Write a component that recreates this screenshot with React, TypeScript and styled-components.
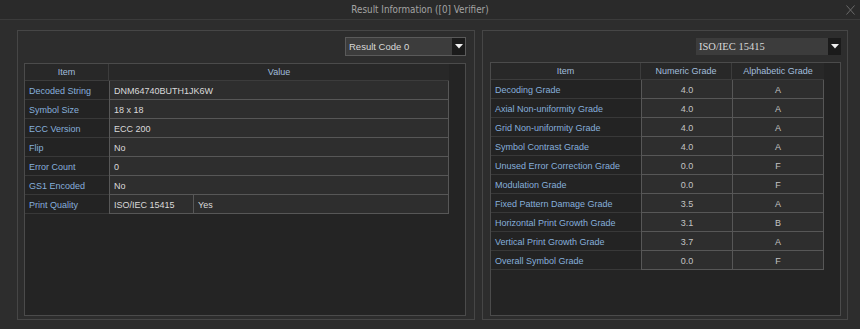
import React from 'react'
import styled, { createGlobalStyle } from 'styled-components'

const GlobalStyle = createGlobalStyle`
  html, body {
    margin: 0;
    padding: 0;
    background: #2d2d2d;
  }
  body {
    font-family: 'Liberation Sans', Arial, sans-serif;
    font-size: 9px;
  }
`

const Window = styled.div`
  width: 860px;
  height: 329px;
  background: #2d2d2d;
  display: flex;
  flex-direction: column;
  overflow: hidden;
`

const TitleBar = styled.div`
  height: 19px;
  background: #2a2a2a;
  border-bottom: 1px solid #3b3b3b;
  display: flex;
  align-items: center;
  justify-content: center;
  padding-right: 20px;
  position: relative;
`

const Title = styled.span`
  font-family: 'DejaVu Sans Condensed', 'Liberation Sans', sans-serif;
  font-stretch: condensed;
  font-size: 9.8px;
  line-height: 1;
  color: #a4a4a4;
`

const CloseButton = styled.button`
  position: absolute;
  right: 5px;
  top: 5px;
  width: 10px;
  height: 10px;
  padding: 0;
  border: none;
  background: transparent;
  display: flex;
  align-items: center;
  justify-content: center;
`

const Body = styled.div`
  display: flex;
  gap: 7px;
  padding: 10px 0 0 17px;
`

const GroupBox = styled.div<{ $width: number; $padLeft: number; $padRight: number }>`
  box-sizing: border-box;
  width: ${(p) => p.$width}px;
  height: 290px;
  border: 1px solid #464646;
  padding: 6px ${(p) => p.$padRight}px 3px ${(p) => p.$padLeft}px;
  display: flex;
  flex-direction: column;
`

const Toolbar = styled.div<{ $gap: number }>`
  display: flex;
  justify-content: flex-end;
  margin-bottom: ${(p) => p.$gap}px;
`

const Select = styled.div<{ $width: number; $height: number; $bordered?: boolean }>`
  box-sizing: border-box;
  width: ${(p) => p.$width}px;
  height: ${(p) => p.$height}px;
  display: flex;
  background: #3c3c3c;
  border: ${(p) => (p.$bordered ? '1px solid #5a5a5a' : 'none')};
  ${(p) => (p.$bordered ? '' : 'margin-top: 1px;')}
`

const SelectLabel = styled.span<{ $serif?: boolean }>`
  flex: 1;
  display: flex;
  align-items: center;
  padding-left: 3px;
  font-family: ${(p) =>
    p.$serif ? "'Liberation Serif', 'Times New Roman', serif" : "'Liberation Sans', Arial, sans-serif"};
  font-size: ${(p) => (p.$serif ? 10.5 : 9.5)}px;
  color: #d8d8d8;
`

const SelectArrow = styled.span`
  width: 13px;
  background: #1b1b1b;
  display: flex;
  align-items: center;
  justify-content: center;
`

const TableFrame = styled.div`
  flex: 1;
  border: 1px solid #4b4b4b;
  background: #242424;
  align-self: stretch;
`

const Grid = styled.div<{ $cols: string }>`
  display: grid;
  grid-template-columns: ${(p) => p.$cols};
  grid-template-rows: 17px;
  grid-auto-rows: 19px;
`

const HeadCell = styled.div<{ $last?: boolean }>`
  box-sizing: border-box;
  background: #282828;
  border-bottom: 1px solid #3c3c3c;
  border-right: ${(p) => (p.$last ? 'none' : '1px solid #3c3c3c')};
  display: flex;
  align-items: center;
  justify-content: center;
  color: #a2bedd;
`

const LabelCell = styled.div`
  box-sizing: border-box;
  background: #232323;
  border-bottom: 1px solid #383838;
  display: flex;
  align-items: center;
  padding: 1px 0 0 4px;
  color: #86afdc;
  white-space: nowrap;
`

const ValueCell = styled.div<{ $center?: boolean; $last?: boolean }>`
  box-sizing: border-box;
  background: #2e2e2e;
  border-bottom: 1px solid #575757;
  border-left: 1px solid #575757;
  border-right: ${(p) => (p.$last ? '1px solid #575757' : 'none')};
  display: flex;
  align-items: center;
  justify-content: ${(p) => (p.$center ? 'center' : 'flex-start')};
  padding: 1px 0 0 ${(p) => (p.$center ? 0 : 4)}px;
  color: ${(p) => (p.$center ? '#c4c4c4' : '#dadada')};
  white-space: nowrap;
`

const SpanCell = styled(ValueCell)`
  display: grid;
  grid-template-columns: 84px 1fr;
  padding: 0;
`

const SubCell = styled.div<{ $first?: boolean }>`
  display: flex;
  align-items: center;
  padding: 1px 0 0 4px;
  height: 100%;
  box-sizing: border-box;
  border-right: ${(p) => (p.$first ? '1px solid #575757' : 'none')};
`

const ArrowIcon = () => (
  <svg width="8" height="5" viewBox="0 0 8 5">
    <polygon points="0,0 8,0 4,4.5" fill="#f0f0f0" />
  </svg>
)

const resultRows: { item: string; value: string; extra?: string }[] = [
  { item: 'Decoded String', value: 'DNM64740BUTH1JK6W' },
  { item: 'Symbol Size', value: '18 x 18' },
  { item: 'ECC Version', value: 'ECC 200' },
  { item: 'Flip', value: 'No' },
  { item: 'Error Count', value: '0' },
  { item: 'GS1 Encoded', value: 'No' },
  { item: 'Print Quality', value: 'ISO/IEC 15415', extra: 'Yes' },
]

const gradeRows: [string, string, string][] = [
  ['Decoding Grade', '4.0', 'A'],
  ['Axial Non-uniformity Grade', '4.0', 'A'],
  ['Grid Non-uniformity Grade', '4.0', 'A'],
  ['Symbol Contrast Grade', '4.0', 'A'],
  ['Unused Error Correction Grade', '0.0', 'F'],
  ['Modulation Grade', '0.0', 'F'],
  ['Fixed Pattern Damage Grade', '3.5', 'A'],
  ['Horizontal Print Growth Grade', '3.1', 'B'],
  ['Vertical Print Growth Grade', '3.7', 'A'],
  ['Overall Symbol Grade', '0.0', 'F'],
]

const App = () => {
  return (
    <Window>
      <GlobalStyle />
      <TitleBar>
        <Title>Result Information ([0] Verifier)</Title>
        <CloseButton>
          <svg width="9" height="10" viewBox="0 0 9 10">
            <path d="M0.5 0.5 L8.5 9.5 M8.5 0.5 L0.5 9.5" stroke="#6a6a6a" strokeWidth="1" />
          </svg>
        </CloseButton>
      </TitleBar>
      <Body>
        <GroupBox $width={458} $padLeft={6} $padRight={8}>
          <Toolbar $gap={7}>
            <Select $width={121} $height={19} $bordered>
              <SelectLabel>Result Code 0</SelectLabel>
              <SelectArrow>
                <ArrowIcon />
              </SelectArrow>
            </Select>
          </Toolbar>
          <TableFrame>
            <Grid $cols="84px 340px">
              <HeadCell>Item</HeadCell>
              <HeadCell $last>Value</HeadCell>
              {resultRows.map((r) => (
                <React.Fragment key={r.item}>
                  <LabelCell>{r.item}</LabelCell>
                  {r.extra ? (
                    <SpanCell $last>
                      <SubCell $first>{r.value}</SubCell>
                      <SubCell>{r.extra}</SubCell>
                    </SpanCell>
                  ) : (
                    <ValueCell $last>{r.value}</ValueCell>
                  )}
                </React.Fragment>
              ))}
            </Grid>
          </TableFrame>
        </GroupBox>
        {/* grade panel */}
        <GroupBox $width={366} $padLeft={7} $padRight={6}>
          <Toolbar $gap={7}>
            <Select $width={145} $height={17}>
              <SelectLabel $serif>ISO/IEC 15415</SelectLabel>
              <SelectArrow>
                <ArrowIcon />
              </SelectArrow>
            </Select>
          </Toolbar>
          <TableFrame>
            <Grid $cols="150px 91px 92px">
              <HeadCell>Item</HeadCell>
              <HeadCell>Numeric Grade</HeadCell>
              <HeadCell $last>Alphabetic Grade</HeadCell>
              {gradeRows.map(([item, num, alpha]) => (
                <React.Fragment key={item}>
                  <LabelCell>{item}</LabelCell>
                  <ValueCell $center>{num}</ValueCell>
                  <ValueCell $center $last>
                    {alpha}
                  </ValueCell>
                </React.Fragment>
              ))}
            </Grid>
          </TableFrame>
        </GroupBox>
      </Body>
    </Window>
  )
}

export default App
